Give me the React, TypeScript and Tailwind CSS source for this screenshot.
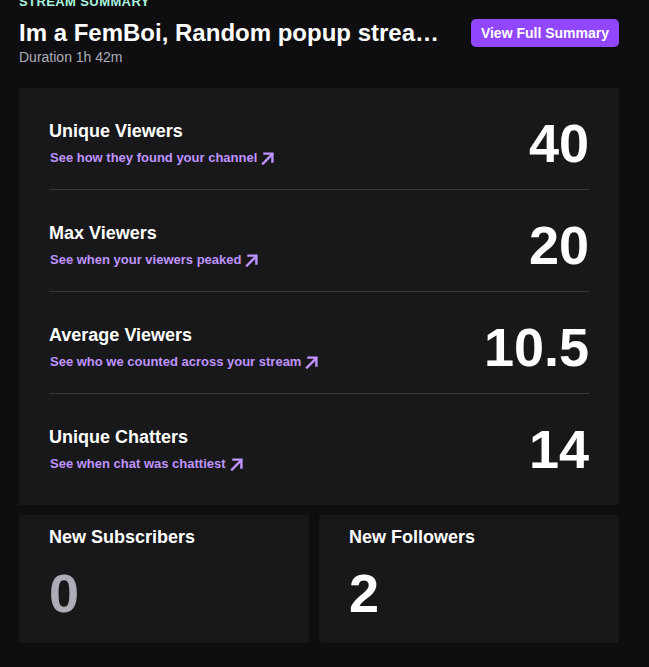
import React from "react";

function Arrow() {
  return (
    <svg width="13" height="13" viewBox="0 0 13 13" fill="none" className="shrink-0">
      <path d="M2 11.5 L11 2.5" stroke="#bf94ff" strokeWidth="2.4" strokeLinecap="square" />
      <path d="M3.5 1.6 H11.4 V9.5" stroke="#bf94ff" strokeWidth="2.4" strokeLinecap="square" fill="none" />
    </svg>
  );
}

const rows = [
  { title: "Unique Viewers", link: "See how they found your channel", value: "40" },
  { title: "Max Viewers", link: "See when your viewers peaked", value: "20" },
  { title: "Average Viewers", link: "See who we counted across your stream", value: "10.5" },
  { title: "Unique Chatters", link: "See when chat was chattiest", value: "14" },
];

export default function App() {
  return (
    <div className="min-h-screen bg-[#0e0e10] [font-family:'Liberation_Sans',Arial,sans-serif] text-white overflow-hidden">
      <div className="w-[600px] ml-[19px] mt-[-6px]">
        <div className="text-[13px] leading-[16px] font-bold tracking-[0.4px] text-[#a9f3de] uppercase mb-[9px]">
          Stream Summary
        </div>
        <div className="flex items-start gap-[24px]">
          <div className="flex-1 min-w-0">
            <div className="text-[24px] leading-[28px] font-bold truncate">
              Im a FemBoi, Random popup stream with friends tonight
            </div>
            <div className="text-[14px] leading-[20px] text-[#adadb8]">Duration 1h 42m</div>
          </div>
          <button className="h-[28px] px-[10px] rounded-[5px] bg-[#9147ff] text-white text-[14px] font-bold leading-none shrink-0">
            View Full Summary
          </button>
        </div>

        <div className="mt-[21px] bg-[#18181b] px-[30px] pb-[10px]">
          {rows.map((r, i) => (
            <div
              key={r.title}
              className={
                "flex items-center justify-between pt-[33px] pb-[23px] " +
                (i < rows.length - 1 ? "border-b border-[#36363b]" : "")
              }
            >
              <div className="flex flex-col">
                <div className="text-[18px] leading-[20px] font-bold">{r.title}</div>
                <div className="mt-[9px] pl-px flex items-center gap-[4px] text-[13px] leading-[16px] font-bold text-[#bf94ff]">
                  <span>{r.link}</span>
                  <Arrow />
                </div>
              </div>
              <div className="text-[54px] leading-[45px] font-bold">{r.value}</div>
            </div>
          ))}
        </div>

        <div className="mt-[10px] grid grid-cols-[290px_300px] gap-[10px]">
          <div className="bg-[#18181b] rounded-[3px] px-[30px] pt-[12px] h-[128px]">
            <div className="text-[18px] leading-[20px] font-bold">New Subscribers</div>
            <div className="mt-[19px] text-[54px] leading-[54px] font-bold text-[#adadb8]">0</div>
          </div>
          <div className="bg-[#18181b] rounded-[3px] px-[30px] pt-[12px] h-[128px]">
            <div className="text-[18px] leading-[20px] font-bold">New Followers</div>
            <div className="mt-[19px] text-[54px] leading-[54px] font-bold">2</div>
          </div>
        </div>
      </div>
    </div>
  );
}
